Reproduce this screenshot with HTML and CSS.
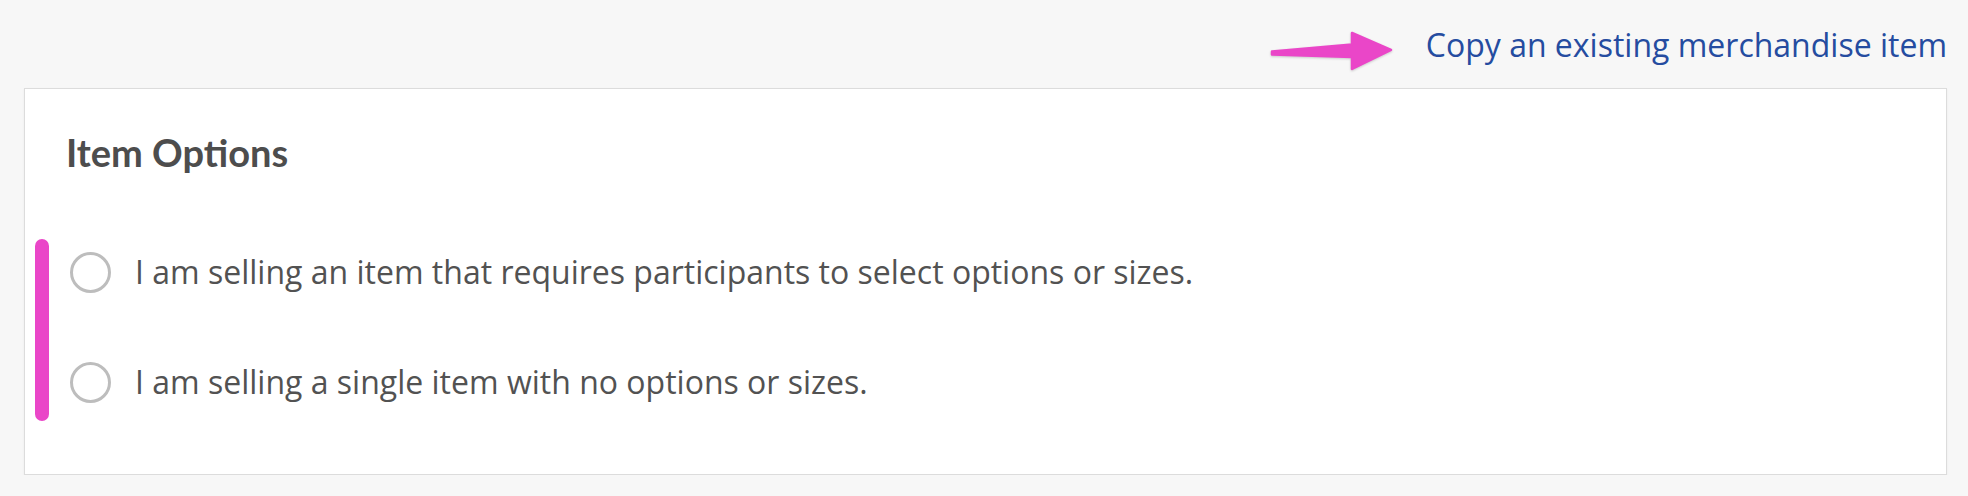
FILE: index.html
```html
<!DOCTYPE html>
<html lang="en">
<head>
<meta charset="utf-8">
<title>Item Options</title>
<link rel="stylesheet" href="styles.css">
</head>
<body>
  <div class="topbar">
    <svg class="arrow" width="134" height="50" viewBox="0 0 134 50" aria-hidden="true">
      <polygon points="10,28.5 90,21.5 90,10 129,27 90,46 90,34 10,31.5" fill="#ea46c8" stroke="#ea46c8" stroke-width="2.5" stroke-linejoin="round"/>
    </svg>
    <a class="copy-link" href="#">Copy an existing merchandise item</a>
  </div>
  <section class="card">
    <h2 class="card-title">Item Options</h2>
    <div class="options">
      <span class="highlight"></span>
      <label class="option">
        <span class="radio"></span>
        <span class="option-text">I am selling an item that requires participants to select options or sizes.</span>
      </label>
      <label class="option">
        <span class="radio"></span>
        <span class="option-text">I am selling a single item with no options or sizes.</span>
      </label>
    </div>
  </section>
</body>
</html>
```

FILE: styles.css
```css
html, body {
  margin: 0;
  background: #f7f7f7;
}

body {
  padding: 22px 21px 0 24px;
  font-family: "Open Sans", "Liberation Sans", sans-serif;
}

.topbar {
  display: flex;
  justify-content: flex-end;
  align-items: flex-start;
  height: 44px;
  margin-bottom: 22px;
}

.arrow {
  display: block;
  margin-right: 30px;
  margin-top: 1px;
  overflow: visible;
  filter: drop-shadow(0 1px 1px rgba(0, 0, 0, 0.18));
}

.copy-link {
  font-size: 32px;
  line-height: 44px;
  color: #254ca0;
  text-decoration: none;
  margin-top: 1px;
}

.card {
  background: #fff;
  border: 1px solid #dcdcdc;
  box-shadow: 0 1px 2px rgba(0, 0, 0, 0.06);
  padding: 41px 43px 70px 45px;
  height: 387px;
  box-sizing: border-box;
}

.card-title {
  margin: 0 0 75px -4px;
  font-family: Lato, "Liberation Sans", sans-serif;
  font-weight: 700;
  font-size: 38px;
  line-height: 45px;
  color: #4d4d4d;
}

.options {
  position: relative;
  display: flex;
  flex-direction: column;
  gap: 66px;
}

.highlight {
  position: absolute;
  left: -35px;
  top: -11px;
  width: 14px;
  height: 182px;
  border-radius: 7px;
  background: #ea46c8;
}

.option {
  display: flex;
  align-items: center;
  height: 44px;
}

.radio {
  width: 41px;
  height: 41px;
  box-sizing: border-box;
  border: 3px solid #bdbdbd;
  border-radius: 50%;
  background: #fff;
  flex: none;
  margin-right: 24px;
}

.option-text {
  font-size: 32px;
  line-height: 44px;
  color: #525252;
}
```
